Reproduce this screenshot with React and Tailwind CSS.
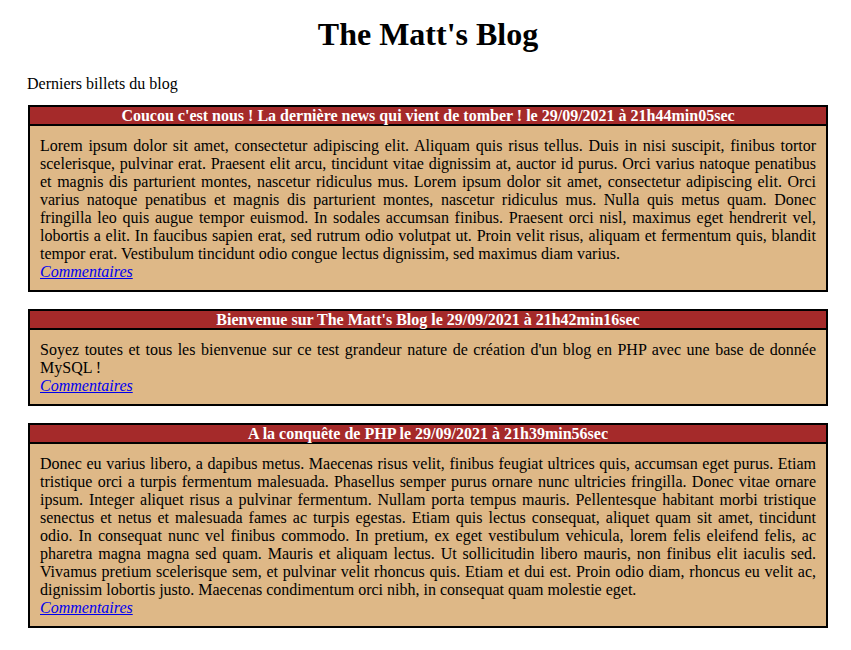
import React from 'react';

const posts = [
  {
    id: 1,
    title: "Coucou c'est nous ! La dernière news qui vient de tomber !",
    date: 'le 29/09/2021 à 21h44min05sec',
    content:
      "Lorem ipsum dolor sit amet, consectetur adipiscing elit. Aliquam quis risus tellus. Duis in nisi suscipit, finibus tortor scelerisque, pulvinar erat. Praesent elit arcu, tincidunt vitae dignissim at, auctor id purus. Orci varius natoque penatibus et magnis dis parturient montes, nascetur ridiculus mus. Lorem ipsum dolor sit amet, consectetur adipiscing elit. Orci varius natoque penatibus et magnis dis parturient montes, nascetur ridiculus mus. Nulla quis metus quam. Donec fringilla leo quis augue tempor euismod. In sodales accumsan finibus. Praesent orci nisl, maximus eget hendrerit vel, lobortis a elit. In faucibus sapien erat, sed rutrum odio volutpat ut. Proin velit risus, aliquam et fermentum quis, blandit tempor erat. Vestibulum tincidunt odio congue lectus dignissim, sed maximus diam varius.",
  },
  {
    id: 2,
    title: "Bienvenue sur The Matt's Blog",
    date: 'le 29/09/2021 à 21h42min16sec',
    content:
      "Soyez toutes et tous les bienvenue sur ce test grandeur nature de création d'un blog en PHP avec une base de donnée MySQL !",
  },
  {
    id: 3,
    title: 'A la conquête de PHP',
    date: 'le 29/09/2021 à 21h39min56sec',
    content:
      'Donec eu varius libero, a dapibus metus. Maecenas risus velit, finibus feugiat ultrices quis, accumsan eget purus. Etiam tristique orci a turpis fermentum malesuada. Phasellus semper purus ornare nunc ultricies fringilla. Donec vitae ornare ipsum. Integer aliquet risus a pulvinar fermentum. Nullam porta tempus mauris. Pellentesque habitant morbi tristique senectus et netus et malesuada fames ac turpis egestas. Etiam quis lectus consequat, aliquet quam sit amet, tincidunt odio. In consequat nunc vel finibus commodo. In pretium, ex eget vestibulum vehicula, lorem felis eleifend felis, ac pharetra magna magna sed quam. Mauris et aliquam lectus. Ut sollicitudin libero mauris, non finibus elit iaculis sed. Vivamus pretium scelerisque sem, et pulvinar velit rhoncus quis. Etiam et dui est. Proin odio diam, rhoncus eu velit ac, dignissim lobortis justo. Maecenas condimentum orci nibh, in consequat quam molestie eget.',
  },
];

const App = () => {
  return (
    <div className="min-h-[650px] bg-white text-black font-['Liberation_Serif','Times_New_Roman',serif] text-[16px] leading-[18px]">
      <div className="ml-[28px] w-[800px] pt-[16px]">
        <h1 className="text-center text-[32px] font-bold leading-[37px]">The Matt's Blog</h1>
        <p className="-ml-px mt-[22px] mb-[12px]">Derniers billets du blog</p>

        <div className="flex flex-col gap-[17px]">
          {posts.map((p) => (
            <div key={p.id} className="border-2 border-black">
              <h3 className="h-[19px] border-b-2 border-black bg-[#a52a2a] text-center font-bold leading-[18px] text-white">
                {p.title} {p.date}
              </h3>
              <p className="bg-[#deb887] px-[10px] pt-[11px] pb-[9px] text-justify">
                {p.content}
                <br />
                <em>
                  <a href="#" className="text-[#0000ee] underline">Commentaires</a>
                </em>
              </p>
            </div>
          ))}
        </div>
      </div>
    </div>
  );
};

export default App;
